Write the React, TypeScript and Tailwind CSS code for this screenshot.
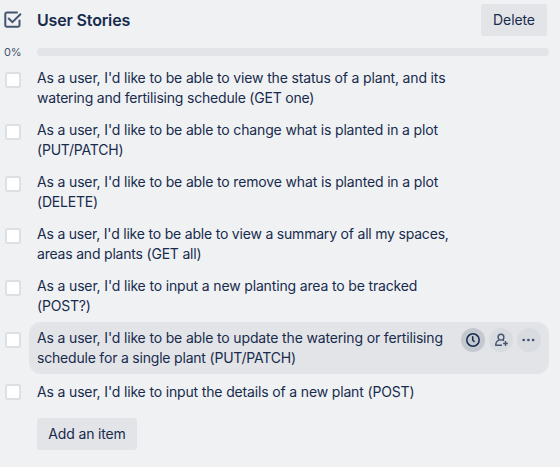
const items: { lines: string[]; active?: boolean; tight?: boolean }[] = [
  { lines: ["As a user, I'd like to be able to view the status of a plant, and its", "watering and fertilising schedule (GET one)"] },
  { lines: ["As a user, I'd like to be able to change what is planted in a plot", "(PUT/PATCH)"] },
  { lines: ["As a user, I'd like to be able to remove what is planted in a plot", "(DELETE)"] },
  { lines: ["As a user, I'd like to be able to view a summary of all my spaces,", "areas and plants (GET all)"], tight: true },
  { lines: ["As a user, I'd like to input a new planting area to be tracked", "(POST?)"] },
  { lines: ["As a user, I'd like to be able to update the watering or fertilising", "schedule for a single plant (PUT/PATCH)"], active: true },
  { lines: ["As a user, I'd like to input the details of a new plant (POST)"] },
];

function RowActions() {
  return (
    <div className="mt-1.5 mr-2 flex gap-1">
      <button className="flex size-6 items-center justify-center rounded-full bg-[#c4c9d0] text-[#172b4d]">
        <svg width="16" height="16" viewBox="0 0 16 16" fill="none" stroke="currentColor" strokeWidth="1.5" strokeLinecap="round" strokeLinejoin="round">
          <circle cx="8" cy="8" r="6.2" />
          <path d="M7.7 4.7V8L9.1 9.5" />
        </svg>
      </button>
      <button className="flex size-6 items-center justify-center rounded-full bg-[#d8dbe0] text-[#44546f]">
        <svg width="16" height="16" viewBox="0 0 16 16" fill="none" stroke="currentColor" strokeWidth="1.4" strokeLinejoin="round">
          <circle cx="8" cy="5.2" r="2.9" />
          <path d="M6.4 7.8C4.2 8.6 2.7 10.5 2.7 13.2H9M9.6 7.6L11 8.6M12.5 9.1V13.9M10.1 11.5H14.9" />
        </svg>
      </button>
      <button className="flex size-6 items-center justify-center rounded-full bg-[#d8dbe0] text-[#44546f]">
        <svg width="16" height="16" viewBox="0 0 16 16" fill="currentColor">
          <circle cx="2.7" cy="8" r="1.35" />
          <circle cx="7.4" cy="8" r="1.35" />
          <circle cx="12.1" cy="8" r="1.35" />
        </svg>
      </button>
    </div>
  );
}

export default function App() {
  return (
    <div className="h-[467px] w-[560px] overflow-hidden bg-[#f0f1f3] pr-[11px] font-['Inter','Liberation_Sans',sans-serif] text-sm leading-5 text-[#172b4d]">
      <header className="flex items-start pt-1 pr-0.5">
        <svg className="mt-[7px] ml-1 shrink-0 text-[#44546f]" width="18" height="18" viewBox="0 0 18 18" fill="none" stroke="currentColor" strokeWidth="2">
          <path d="M13.8 1.6H2.8A1.5 1.5 0 0 0 1.3 3.1V14.3A1.5 1.5 0 0 0 2.8 15.8H14A1.5 1.5 0 0 0 15.5 14.3V8.8" />
          <path d="M4.2 7L8.4 11.2L16.9 2.7" />
        </svg>
        <h3 className="mt-1.5 ml-[15px] flex-1 text-base leading-5 font-semibold tracking-[-0.16px]">User Stories</h3>
        <button className="h-8 w-[66px] rounded-[3px] bg-[#e3e4e8] tracking-[-0.1px]">Delete</button>
      </header>
      <div className="mt-2 flex h-4 items-center">
        <span className="w-[37px] pl-1 text-[11px] leading-4 tracking-[-0.2px] text-[#44546f]">0%</span>
        <div className="h-2 flex-1 rounded-full bg-[#e3e4e8]" />
      </div>
      <ul className="mt-0.5">
        {items.map((item) => (
          <li key={item.lines[0]} className="flex">
            <span className="mt-2.5 mr-2 ml-[5px] size-4 shrink-0 rounded-[2px] border-2 border-[#dcdfe4] bg-white" />
            <div className={item.active ? "flex flex-1 justify-between rounded-xl bg-[#e3e4e8]" : "flex flex-1"}>
              <p className={item.lines.length > 1 ? "py-1.5 pl-2 whitespace-nowrap" : "py-2 pl-2 whitespace-nowrap"}>
                {item.lines.map((line, i) => (
                  <span key={line} className={i > 0 || item.tight ? "block tracking-[-0.2px]" : "block tracking-[-0.155px]"}>{line}</span>
                ))}
              </p>
              {item.active && <RowActions />}
            </div>
          </li>
        ))}
      </ul>
      <button className="mt-2 ml-[37px] h-8 w-[100px] rounded-[3px] bg-[#e3e4e8] tracking-[-0.16px]">Add an item</button>
    </div>
  );
}
